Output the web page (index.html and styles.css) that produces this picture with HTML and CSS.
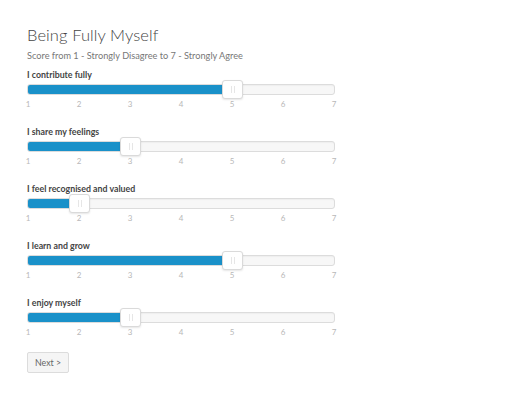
FILE: index.html
```html
<!DOCTYPE html>
<html>
<head>
<meta charset="utf-8">
<link rel="stylesheet" href="styles.css">
</head>
<body>
<div class="page">
  <h1 class="title">Being Fully Myself</h1>
  <p class="subtitle">Score from 1 - Strongly Disagree to 7 - Strongly Agree</p>

  <div class="question">
    <div class="label">I contribute fully</div>
    <div class="track"><div class="fill" style="width: 66.67%"></div><div class="handle" style="left: 66.67%"></div></div>
    <div class="ticks"><span>1</span><span>2</span><span>3</span><span>4</span><span>5</span><span>6</span><span>7</span></div>
  </div>

  <div class="question">
    <div class="label">I share my feelings</div>
    <div class="track"><div class="fill" style="width: 33.33%"></div><div class="handle" style="left: 33.33%"></div></div>
    <div class="ticks"><span>1</span><span>2</span><span>3</span><span>4</span><span>5</span><span>6</span><span>7</span></div>
  </div>

  <div class="question">
    <div class="label">I feel recognised and valued</div>
    <div class="track"><div class="fill" style="width: 16.67%"></div><div class="handle" style="left: 16.67%"></div></div>
    <div class="ticks"><span>1</span><span>2</span><span>3</span><span>4</span><span>5</span><span>6</span><span>7</span></div>
  </div>

  <div class="question">
    <div class="label">I learn and grow</div>
    <div class="track"><div class="fill" style="width: 66.67%"></div><div class="handle" style="left: 66.67%"></div></div>
    <div class="ticks"><span>1</span><span>2</span><span>3</span><span>4</span><span>5</span><span>6</span><span>7</span></div>
  </div>

  <div class="question">
    <div class="label">I enjoy myself</div>
    <div class="track"><div class="fill" style="width: 33.33%"></div><div class="handle" style="left: 33.33%"></div></div>
    <div class="ticks"><span>1</span><span>2</span><span>3</span><span>4</span><span>5</span><span>6</span><span>7</span></div>
  </div>

  <button class="next">Next &gt;</button>
</div>
</body>
</html>
```

FILE: styles.css
```css
html, body {
  margin: 0;
  padding: 0;
  background: #ffffff;
}

body {
  font-family: Lato, "Open Sans", "Liberation Sans", sans-serif;
  color: #444;
}

.page {
  padding: 24px 0 0 27px;
  width: 308px;
}

.title {
  margin: 0;
  font-size: 16.5px;
  font-weight: 300;
  line-height: 22px;
  color: #444;
  letter-spacing: 0.1px;
}

.subtitle {
  margin: 4px 0 7px 0;
  font-size: 9.2px;
  line-height: 12px;
  color: #777;
}

.question {
  height: 57px;
}

.label {
  font-size: 8.8px;
  font-weight: 700;
  line-height: 12px;
  color: #444;
}

.track {
  position: relative;
  margin-top: 3px;
  height: 9px;
  background: #f7f7f7;
  border: 1px solid #dcdcdc;
  border-radius: 3px;
  box-shadow: inset 0 1px 1px #eee;
}

.fill {
  height: 100%;
  background: #1a91c9;
  border-radius: 2px 0 0 2px;
}

.handle {
  position: absolute;
  top: -5px;
  width: 21px;
  height: 19px;
  margin-left: -10px;
  background: #fff;
  border: 1px solid #dadada;
  border-radius: 3px;
  box-shadow: 0 1px 2px rgba(0,0,0,0.10);
  box-sizing: border-box;
}

.handle::before,
.handle::after {
  content: "";
  position: absolute;
  top: 5px;
  width: 1px;
  height: 7px;
  background: #e6e6e6;
}

.handle::before { left: 8px; }
.handle::after { left: 11px; }

.ticks {
  display: flex;
  justify-content: space-between;
  margin-top: 4px;
  font-size: 8px;
  line-height: 10px;
  color: #b8b8b8;
}

.ticks span {
  width: 2px;
  display: flex;
  justify-content: center;
}

.next {
  display: block;
  margin-top: -2px;
  padding: 0 7px;
  height: 21px;
  font-family: Lato, "Open Sans", "Liberation Sans", sans-serif;
  font-size: 8.8px;
  color: #666;
  background: #f5f5f5;
  border: 1px solid #dcdcdc;
  border-radius: 2px;
}
```
